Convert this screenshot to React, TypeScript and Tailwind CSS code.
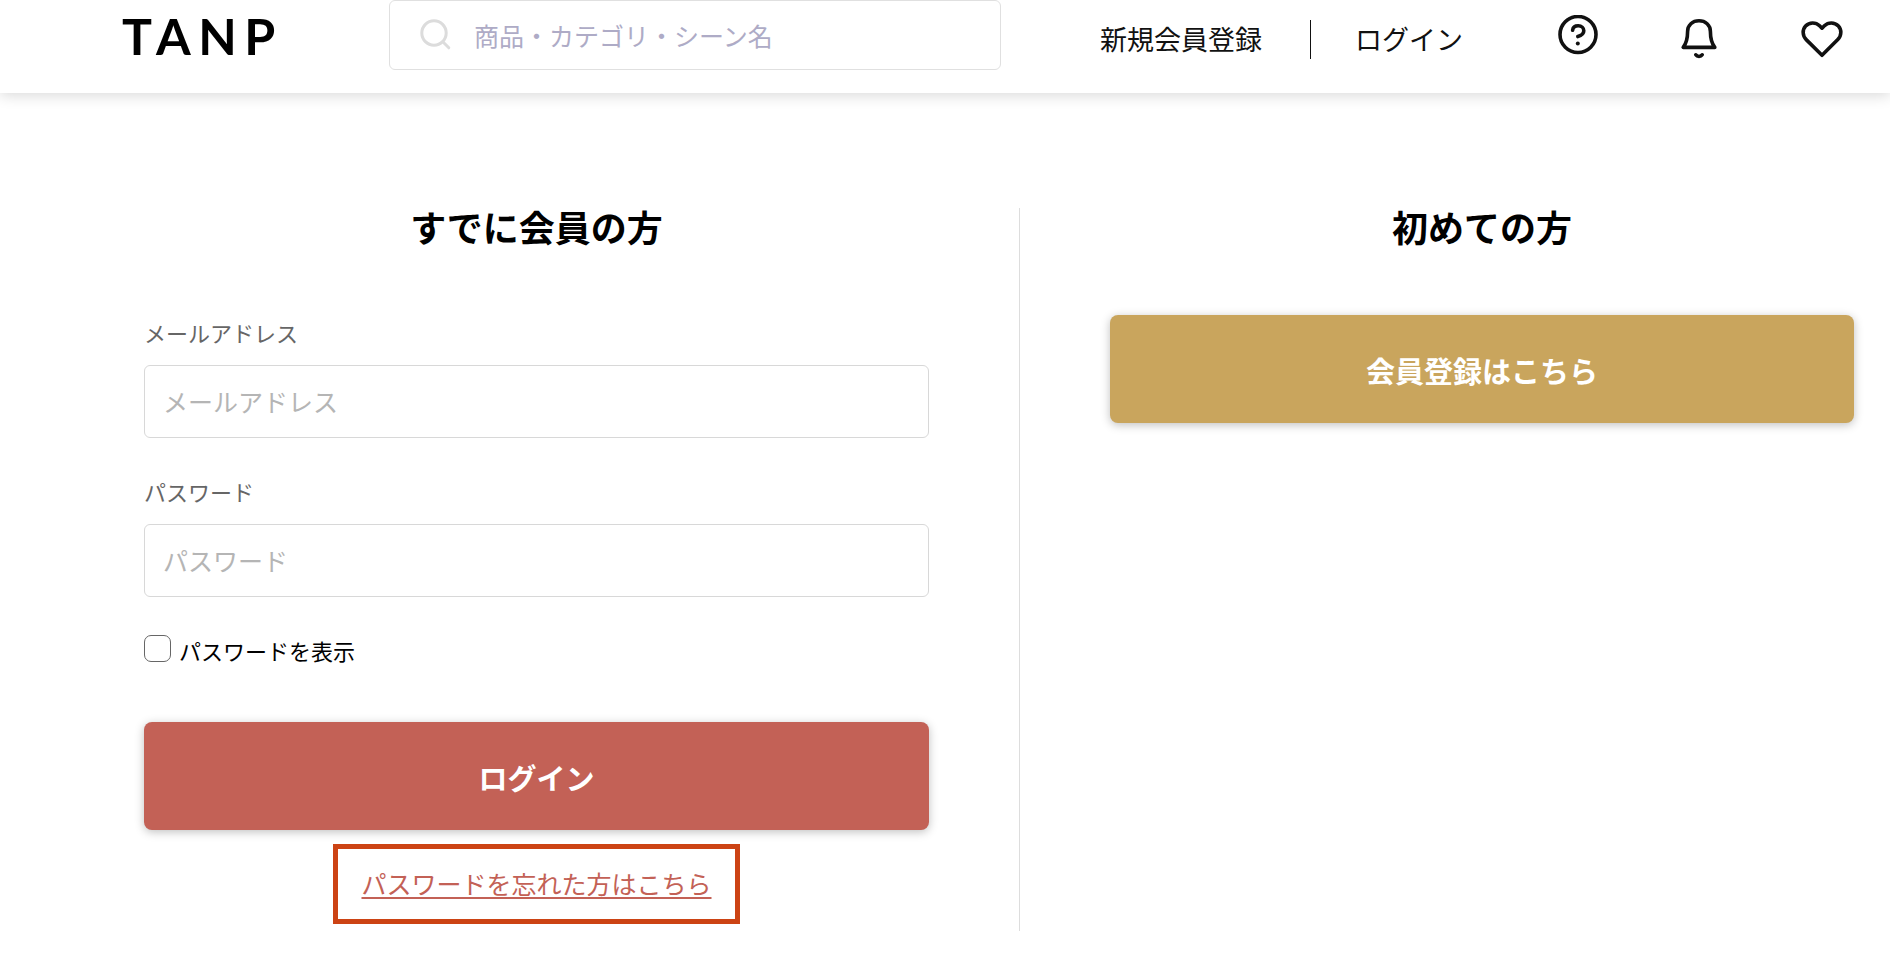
import { useState } from 'react'

function HelpIcon() {
  return (
    <svg viewBox="0 0 40 40" className="size-10" fill="none" stroke="currentColor" strokeWidth="3.6" strokeLinecap="round" aria-hidden="true">
      <circle cx="20" cy="19.500" r="18" />
      <path d="M14.600 15.200C15 12.200 17.200 10.800 20.200 10.800c3.400 0 5.600 2.100 5.600 5 0 3.300-2.500 4.800-6 5.800" />
      <circle cx="19.800" cy="28.500" r="2" fill="currentColor" stroke="none" />
    </svg>
  )
}

function BellIcon() {
  return (
    <svg viewBox="0 0 40 44" className="h-11 w-10" fill="none" stroke="currentColor" strokeWidth="3.6" strokeLinecap="round" strokeLinejoin="round" aria-hidden="true">
      <path d="M4.200 32.400h31.600C32.400 28 31.400 23 31.400 16.500 31.400 10 26.500 5.800 20 5.800S8.600 10 8.600 16.500C8.600 23 7.600 28 4.200 32.400z" />
      <path d="M16.800 39.800c1.400 2.200 5 2.200 6.400 0" />
    </svg>
  )
}

function HeartIcon() {
  return (
    <svg viewBox="0 0 44 40" className="h-10 w-11" fill="none" stroke="currentColor" strokeWidth="3.6" strokeLinecap="round" strokeLinejoin="round" aria-hidden="true">
      <path d="M22 36.300 6.200 20.600C2.400 16.800 2.200 10.700 5.600 7 9.400 2.900 15.800 3 19.600 6.800L22 9.200l2.400-2.400C28.200 3 34.600 2.900 38.400 7c3.400 3.700 3.200 9.800-.6 13.600z" />
    </svg>
  )
}

function Header() {
  return (
    <header className="flex h-[93px] items-start bg-white pr-[46px] pl-[122px] text-[#111] shadow-[0_2px_14px_rgba(0,0,0,0.16)]">
      <a
        href="#"
        className="mt-1 w-[267px] shrink-0 font-['Lato',sans-serif] text-[50px] leading-[64px] font-bold tracking-[0.15em] text-black"
      >
        TANP
      </a>

      <form className="flex h-[70px] max-w-[612px] flex-1 items-center rounded-md border border-[#e0e0e0] pl-[30px]">
        <svg viewBox="0 0 32 32" className="size-8 shrink-0" fill="none" stroke="#dcdcdc" strokeWidth="3" strokeLinecap="round" aria-hidden="true">
          <circle cx="14" cy="14" r="12.200" />
          <path d="m22.800 22.800 6 6" />
        </svg>
        <input
          type="search"
          aria-label="商品・カテゴリ・シーン名"
          placeholder="商品・カテゴリ・シーン名"
          className="ml-[22px] h-full min-w-0 flex-1 text-[25px] outline-none placeholder:text-[#aeabc6]"
        />
      </form>

      <nav className="ml-auto flex h-[78px] items-center text-[27px]">
        <a href="#">新規会員登録</a>
        <span className="mr-11 ml-12 h-[39px] w-px bg-[#111]" />
        <a href="#">ログイン</a>
      </nav>

      <div className="ml-[95px] flex items-start gap-[81px] pt-[15px]">
        <a href="#" aria-label="ヘルプ">
          <HelpIcon />
        </a>
        <a href="#" aria-label="お知らせ">
          <BellIcon />
        </a>
        <a href="#" aria-label="お気に入り" className="pt-1">
          <HeartIcon />
        </a>
      </div>
    </header>
  )
}

export default function App() {
  const [showPassword, setShowPassword] = useState(false)

  return (
    <div className="min-h-screen bg-white font-['Noto_Sans_CJK_JP',sans-serif] text-black">
      <Header />

      <main className="flex pt-[115px] pr-9 pb-7 pl-36">
        <section className="flex-[785] pb-[7px]">
          <h2 className="mb-[73px] text-center text-[36px] leading-9 font-bold">
            すでに会員の方
          </h2>

          <form className="flex flex-col" onSubmit={(e) => e.preventDefault()}>
            <label htmlFor="email" className="mb-[18px] text-[22px] leading-[30px] text-[#666]">
              メールアドレス
            </label>
            <input
              id="email"
              type="email"
              placeholder="メールアドレス"
              className="mb-[38px] h-[73px] rounded-md border border-[#d8d8d8] px-[18px] pb-0.5 text-[25px] outline-none placeholder:text-[#b5b5b5]"
            />

            <label htmlFor="password" className="mb-[18px] text-[22px] leading-[30px] text-[#666]">
              パスワード
            </label>
            <input
              id="password"
              type={showPassword ? 'text' : 'password'}
              placeholder="パスワード"
              className="mb-[38px] h-[73px] rounded-md border border-[#d8d8d8] px-[18px] pb-0.5 text-[25px] outline-none placeholder:text-[#b5b5b5]"
            />

            <div className="mb-[57px] flex items-start gap-2">
              <input
                id="show-password"
                type="checkbox"
                checked={showPassword}
                onChange={(e) => setShowPassword(e.target.checked)}
                className="size-[27px] appearance-none rounded-[7px] border border-[#666] checked:bg-[#c36156]"
              />
              <label htmlFor="show-password" className="text-[22px] leading-[30px]">
                パスワードを表示
              </label>
            </div>

            <button
              type="submit"
              className="h-[108px] rounded-lg bg-[#c36156] pt-1 text-[29px] font-bold text-white shadow-[0_2px_10px_rgba(0,0,0,0.25)]"
            >
              ログイン
            </button>
          </form>

          <div className="mx-auto mt-[14px] flex h-20 w-fit items-center border-[5px] border-[#cc4314] px-[23px]">
            <a href="#" className="text-[25px] text-[#c36156] underline decoration-2 underline-offset-3">
              パスワードを忘れた方はこちら
            </a>
          </div>
        </section>

        <div className="mx-[90px] w-px bg-[#ddd]" />

        <section className="flex-[744]">
          <h2 className="mb-[71px] text-center text-[36px] leading-9 font-bold">
            初めての方
          </h2>
          <button
            type="button"
            className="h-[108px] w-full rounded-lg bg-[#c9a55d] pt-1 text-[29px] font-bold text-white shadow-[0_2px_10px_rgba(0,0,0,0.25)]"
          >
            会員登録はこちら
          </button>
        </section>
      </main>
    </div>
  )
}
